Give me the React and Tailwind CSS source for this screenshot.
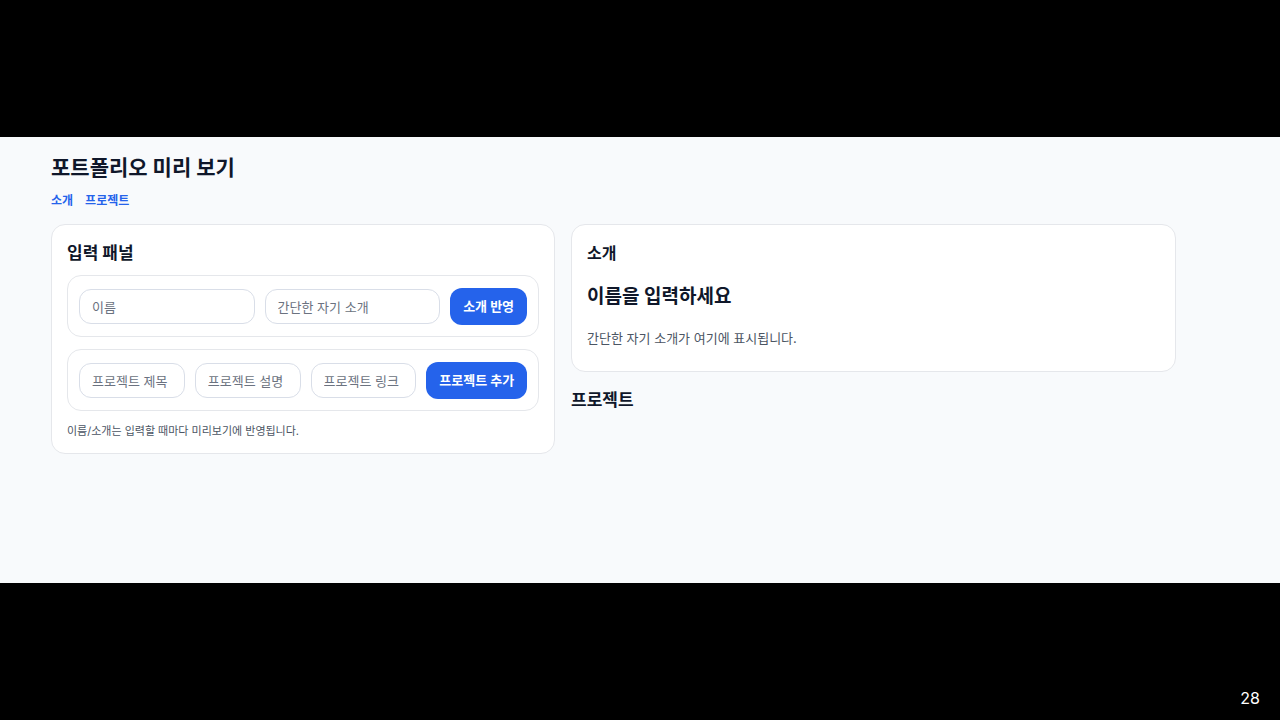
import React, { useState } from 'react';

const font = { fontFamily: '"Inter", "Noto Sans CJK KR", sans-serif' };

const Field = ({ placeholder, value, onChange }) => (
  <input
    value={value}
    onChange={onChange}
    placeholder={placeholder}
    className="h-[35px] w-full min-w-0 flex-1 rounded-[12px] border border-[#d9dee8] bg-white px-3 text-[13px] text-[#111827] placeholder:text-[#6b7280] outline-none"
  />
);

const PrimaryButton = ({ children, onClick }) => (
  <button
    onClick={onClick}
    className="h-[37px] shrink-0 rounded-[12px] bg-[#2563eb] px-[13px] text-[13px] font-bold text-white"
  >
    {children}
  </button>
);

export default function App() {
  const [name, setName] = useState('');
  const [bio, setBio] = useState('');
  const [projects, setProjects] = useState([]);
  const [draft, setDraft] = useState({ title: '', desc: '', link: '' });

  const addProject = () => {
    if (!draft.title) return;
    setProjects([...projects, draft]);
    setDraft({ title: '', desc: '', link: '' });
  };

  return (
    <div className="flex h-[720px] w-[1280px] flex-col bg-black" style={font}>
      <div className="h-[137px] shrink-0" />

      <div className="h-[446px] shrink-0 bg-[#f8fafc] pl-[51px] pt-[17px]">
        <div className="w-[1125px]">
          <h1 className="text-[21px] font-bold leading-[28px] text-[#0f172a]">포트폴리오 미리 보기</h1>
          <nav className="mt-[11px] flex gap-[12px] text-[12px] font-bold leading-[16px] text-[#2563eb]">
            <a href="#about">소개</a>
            <a href="#projects">프로젝트</a>
          </nav>

          <div className="mt-[15px] grid grid-cols-[minmax(0,1fr)_minmax(0,1.2fr)] items-start gap-[16px]">
            {/* input panel */}
            <section className="rounded-[14px] border border-[#e5e7eb] bg-white px-[15px] pb-[14px] pt-[16px]">
              <h2 className="text-[17px] font-bold leading-[24px] text-[#0f172a]">입력 패널</h2>

              <div className="mt-[10px] flex items-center gap-[10px] rounded-[14px] border border-[#e5e7eb] px-[11px] pb-[11px] pt-[12px]">
                <Field placeholder="이름" value={name} onChange={(e) => setName(e.target.value)} />
                <Field placeholder="간단한 자기 소개" value={bio} onChange={(e) => setBio(e.target.value)} />
                <PrimaryButton>소개 반영</PrimaryButton>
              </div>

              <div className="mt-[12px] flex items-center gap-[10px] rounded-[14px] border border-[#e5e7eb] px-[11px] pb-[11px] pt-[12px]">
                <Field placeholder="프로젝트 제목" value={draft.title} onChange={(e) => setDraft({ ...draft, title: e.target.value })} />
                <Field placeholder="프로젝트 설명" value={draft.desc} onChange={(e) => setDraft({ ...draft, desc: e.target.value })} />
                <Field placeholder="프로젝트 링크" value={draft.link} onChange={(e) => setDraft({ ...draft, link: e.target.value })} />
                <PrimaryButton onClick={addProject}>프로젝트 추가</PrimaryButton>
              </div>

              <p className="mt-[12px] text-[11px] leading-[16px] text-[#4b5563]">이름/소개는 입력할 때마다 미리보기에 반영됩니다.</p>
            </section>

            {/* preview */}
            <div>
              <section id="about" className="rounded-[14px] border border-[#e5e7eb] bg-white px-[15px] pb-[24px] pt-[16px]">
                <h2 className="text-[16px] font-bold leading-[24px] text-[#0f172a]">소개</h2>
                <h3 className="mt-[18px] text-[19px] font-bold leading-[28px] text-[#0f172a]">{name || '이름을 입력하세요'}</h3>
                <p className="mt-[18px] text-[13px] leading-[18px] text-[#4b5563]">{bio || '간단한 자기 소개가 여기에 표시됩니다.'}</p>
              </section>
              <h2 id="projects" className="mt-[16px] text-[17px] font-bold leading-[24px] text-[#0f172a]">프로젝트</h2>
              {projects.map((p, i) => (
                <div key={i} className="mt-2 rounded-[14px] border border-[#e5e7eb] bg-white p-4 text-[13px]">
                  <div className="font-bold">{p.title}</div>
                  <div className="text-[#4b5563]">{p.desc}</div>
                </div>
              ))}
            </div>
          </div>
        </div>
      </div>

      <div className="flex flex-1 items-end justify-end pb-[10px] pr-[20px]">
        <span className="text-[16px] text-white">28</span>
      </div>
    </div>
  );
}
